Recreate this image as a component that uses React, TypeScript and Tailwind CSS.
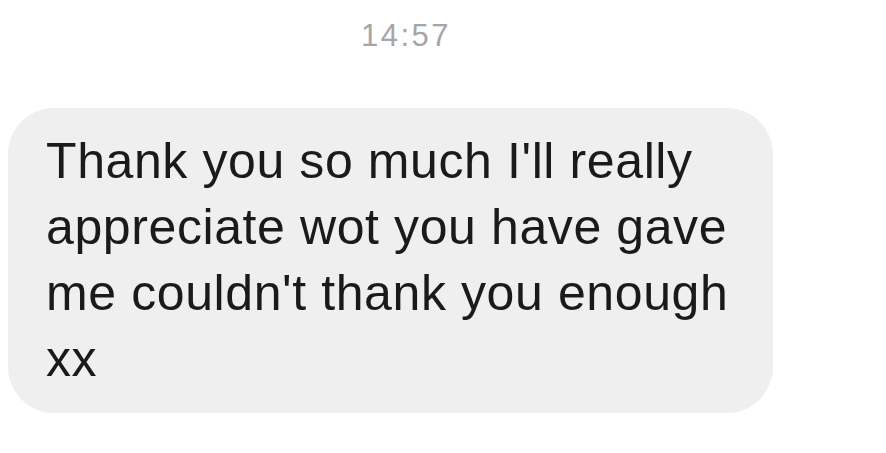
import React from "react";

const lines = [
  "Thank you so much I'll really",
  "appreciate wot you have gave",
  "me couldn't thank you enough",
  "xx",
];

export default function App() {
  return (
    <div
      className="w-[886px] h-[453px] bg-white overflow-hidden"
      style={{ fontFamily: '"Liberation Sans", Arial, sans-serif' }}
    >
      <div className="flex justify-center pt-[18px] pr-[74px]">
        <span className="text-[31px] leading-[36px] tracking-[2.5px] text-[#a6a6a6]">
          14:57
        </span>
      </div>
      <div className="pl-[8px] pt-[54px]">
        <div className="w-[765px] rounded-[46px] bg-[#efefef] pl-[38px] pt-[20px] pb-[21px]">
          <p className="text-[50px] leading-[66px] text-[#1a1a1a] tracking-[0.6px]">
            {lines.map((l, i) => (
              <span key={i} className="block whitespace-nowrap">
                {l}
              </span>
            ))}
          </p>
        </div>
      </div>
    </div>
  );
}
